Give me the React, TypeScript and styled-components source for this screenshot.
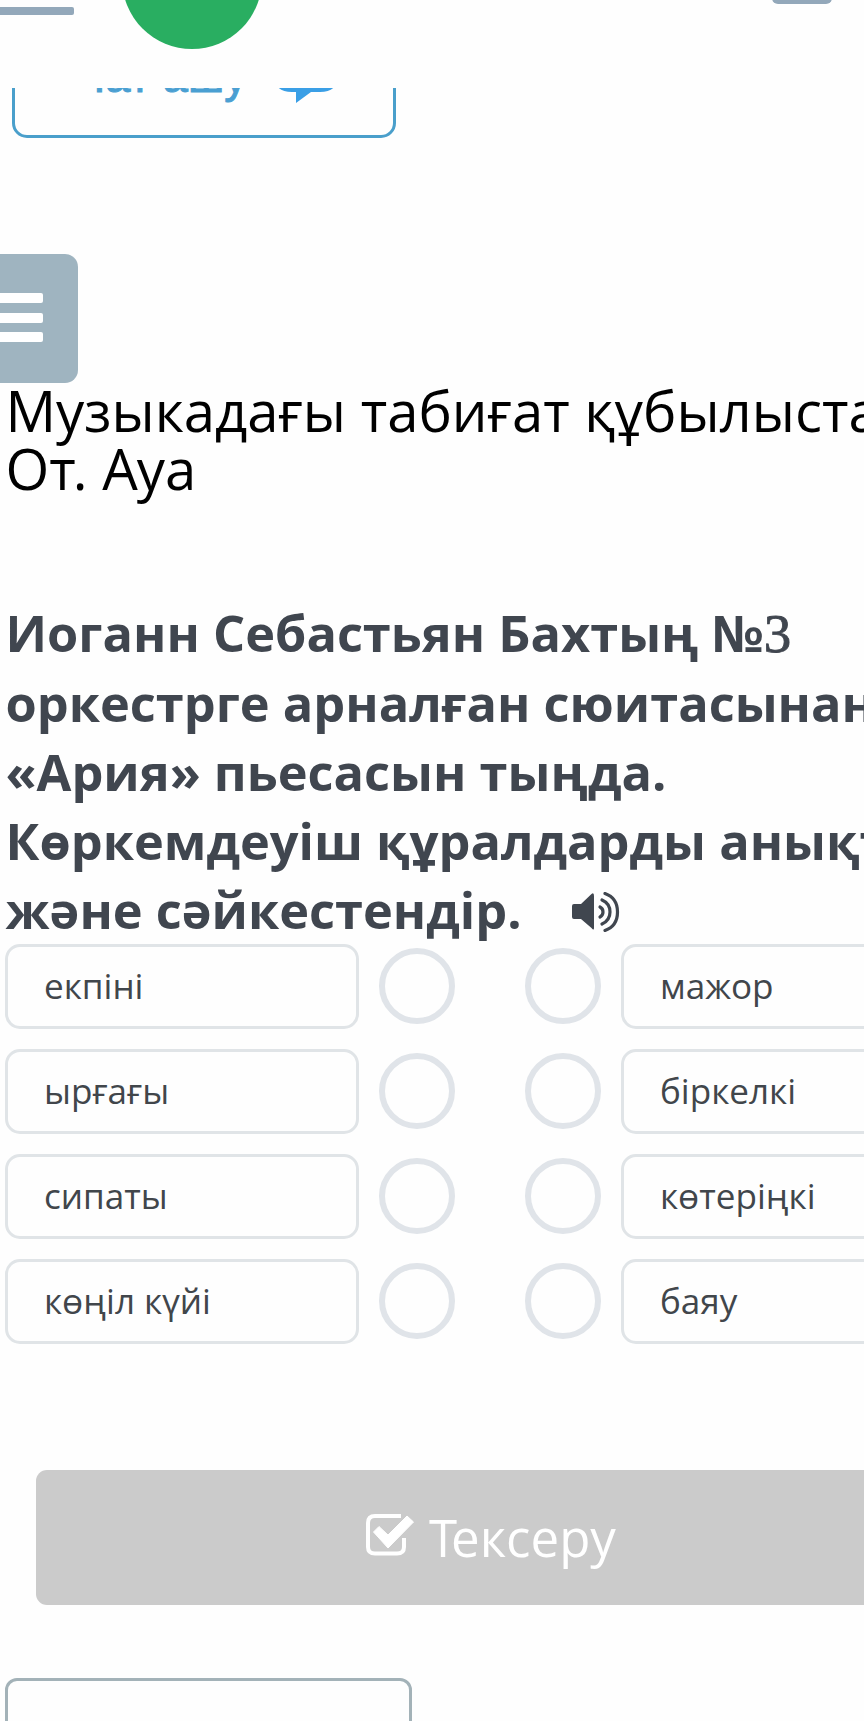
import React from 'react';
import styled, { createGlobalStyle } from 'styled-components';

const GlobalStyle = createGlobalStyle`
  * { box-sizing: border-box; }
  body { margin: 0; background: #fefefe; font-family: "Open Sans", "Noto Sans", sans-serif; }
  button { font: inherit; margin: 0; padding: 0; background: none; border: 0; }
`;

const Page = styled.main`
  width: 100%;
  height: 1721px;
  overflow: hidden;
  display: flex;
  flex-direction: column;
  align-items: flex-start;
`;

const Header = styled.header`
  width: 100%;
  height: 88px;
  flex: none;
  overflow: hidden;
  display: flex;
  align-items: flex-start;
`;

const MenuLine = styled.span`
  width: 74px;
  height: 8px;
  margin-top: 7px;
  border-radius: 0 2px 2px 0;
  background: #93a8ba;
`;

const Avatar = styled.span`
  width: 140px;
  height: 140px;
  margin: -91px 0 0 47.5px;
  border-radius: 50%;
  background: #29ae61;
`;

const HeaderAction = styled.span`
  width: 60px;
  height: 24px;
  margin: -20px 32px 0 auto;
  border-radius: 6px;
  background: #93a8ba;
`;

const ChatArea = styled.div`
  height: 50px;
  flex: none;
  margin-left: 12px;
  overflow: hidden;
  display: flex;
  align-items: flex-end;
`;

const ChatButton = styled.button`
  width: 384px;
  height: 130px;
  flex: none;
  display: flex;
  align-items: center;
  padding: 8px 0 0 60px;
  border: 3px solid #4a9fcb;
  border-radius: 15px;
  color: #4a9fd2;
  font-family: "Liberation Sans", sans-serif;
  font-size: 45.3px;
  line-height: 52px;
  white-space: nowrap;
  -webkit-text-stroke: 1px #4a9fd2;

  svg { margin: 0 0 7px 27px; flex: none; }
`;

const SideMenu = styled.button`
  width: 78px;
  height: 129px;
  flex: none;
  margin-top: 116px;
  padding-bottom: 2px;
  display: flex;
  flex-direction: column;
  justify-content: center;
  gap: 9.5px;
  border-radius: 0 13px 13px 0;
  background: #9fb4c0;
`;

const SideMenuBar = styled.span`
  width: 43px;
  height: 10px;
  border-radius: 0 2px 2px 0;
  background: #fff;
`;

const Title = styled.h1`
  margin: -2px 0 0 5.5px;
  font-size: 56.25px;
  font-weight: 400;
  line-height: 58px;
  color: #000;
  white-space: nowrap;
`;

const Kern = styled.span<{ $by: number }>`
  letter-spacing: ${({ $by }) => $by}px;
`;

const Question = styled.h2`
  margin: 101.4px 0 -0.4px 5.5px;
  font-size: 50.5px;
  font-weight: 700;
  line-height: 69.2px;
  color: #40464f;
  white-space: nowrap;
`;

const Line = styled.span`
  display: block;
  height: 69.2px;
`;

const MathNumber = styled.span`
  font-family: "Liberation Serif", serif;
  font-size: 55px;
  font-weight: 400;
  line-height: 1px;
  -webkit-text-stroke: 0.8px #40464f;
`;

const Speaker = styled.svg`
  margin-left: 50px;
  vertical-align: -3px;
`;

const Pairs = styled.section`
  margin: 0 0 0 5px;
  display: flex;
  flex-direction: column;
  gap: 20px;
`;

const PairGroup = styled.div`
  display: flex;
  gap: 70px;
`;

const Side = styled.div`
  display: flex;
  align-items: center;
  gap: 20px;
`;

const Option = styled.div`
  width: 354px;
  height: 85px;
  flex: none;
  display: flex;
  align-items: center;
  padding: 0 0 3px 36px;
  border: 3px solid #e0e4e7;
  border-radius: 15px;
  font-size: 35.1px;
  line-height: 48px;
  color: #41464b;
`;

const Socket = styled.span`
  width: 76px;
  height: 76px;
  flex: none;
  border: 6px solid #e0e4e9;
  border-radius: 50%;
`;

const CheckButton = styled.button`
  width: 960px;
  height: 135px;
  flex: none;
  margin: 126px 0 0 36px;
  padding-left: 330px;
  display: flex;
  align-items: center;
  border-radius: 11px;
  background: #cbcbcb;
  color: #fff;
  font-size: 51px;
  line-height: 71px;

  svg { flex: none; margin: -5px 15px 0 0; }
`;

const NextButton = styled.button`
  width: 407px;
  height: 130px;
  flex: none;
  margin: 73px 0 0 5px;
  border: 3px solid #a3b2b8;
  border-radius: 12px;
`;

const pairs = [
  ['екпіні', 'мажор'],
  ['ырғағы', 'біркелкі'],
  ['сипаты', 'көтеріңкі'],
  ['көңіл күйі', 'баяу'],
];

export default function App() {
  return (
    <Page>
      <GlobalStyle />
      <Header>
        <MenuLine />
        <Avatar />
        <HeaderAction />
      </Header>
      <ChatArea>
        <ChatButton>
          Чат ашу
          <svg width="64" height="58" viewBox="0 0 64 58" fill="#3a9fe6">
            <path d="M16 0H48Q64 0 64 16V30Q64 47 46 47H37L22 58V47H18Q0 47 0 30V16Q0 0 16 0Z" />
          </svg>
        </ChatButton>
      </ChatArea>
      <SideMenu aria-label="Мәзір">
        <SideMenuBar />
        <SideMenuBar />
        <SideMenuBar />
      </SideMenu>
      <Title>
        Музыкадағы табиғат құбылыстары.
        <br />
        О<Kern $by={-3}>т</Kern>. <Kern $by={-1}>А</Kern>уа
      </Title>
      <Question>
        <Line>Иоганн Себастьян Бахтың №<MathNumber>3</MathNumber></Line>
        <Line>оркестрге арналған сюитасынан</Line>
        <Line>«Ария» пьесасын тыңда.</Line>
        <Line>Көркемдеуіш құралдарды анықта</Line>
        <Line>
          және сәйкестендір.
          <Speaker width="48" height="40" viewBox="0 0 48 40">
            <path d="M2 12H9L19.500 2Q22 0 22 4V36Q22 39 19.500 36L9 27H2Q0 27 0 25V14Q0 12 2 12Z" fill="#40464f" />
            <g fill="none" stroke="#40464f" strokeWidth="3.200" strokeLinecap="round">
              <path d="M28 15Q31 16.500 31 20Q31 23.500 28 25" />
              <path d="M30 8Q38 11.500 38 20Q38 28.500 30 32" />
              <path d="M33 1.500Q45.500 6 45.500 20Q45.500 34 33 38.500" />
            </g>
          </Speaker>
        </Line>
      </Question>
      <Pairs>
        {pairs.map(([left, right]) => (
          <PairGroup key={left}>
            <Side>
              <Option>{left}</Option>
              <Socket />
            </Side>
            <Side>
              <Socket />
              <Option>{right}</Option>
            </Side>
          </PairGroup>
        ))}
      </Pairs>
      <CheckButton>
        <svg width="48" height="42" viewBox="0 0 48 42">
          <path d="M35 2H9Q2 2 2 9V33Q2 39.500 9 39.500H31Q38 39.500 38 33V24" fill="none" stroke="#fff" strokeWidth="4" />
          <path d="M7.500 18L13 12.500L22 21L41 2L47.500 8L22 34Z" fill="#fff" stroke="#fff" strokeLinejoin="round" />
        </svg>
        <span><Kern $by={-6}>Т</Kern>ексеру</span>
      </CheckButton>
      <NextButton aria-label="Артқа" />
    </Page>
  );
}
